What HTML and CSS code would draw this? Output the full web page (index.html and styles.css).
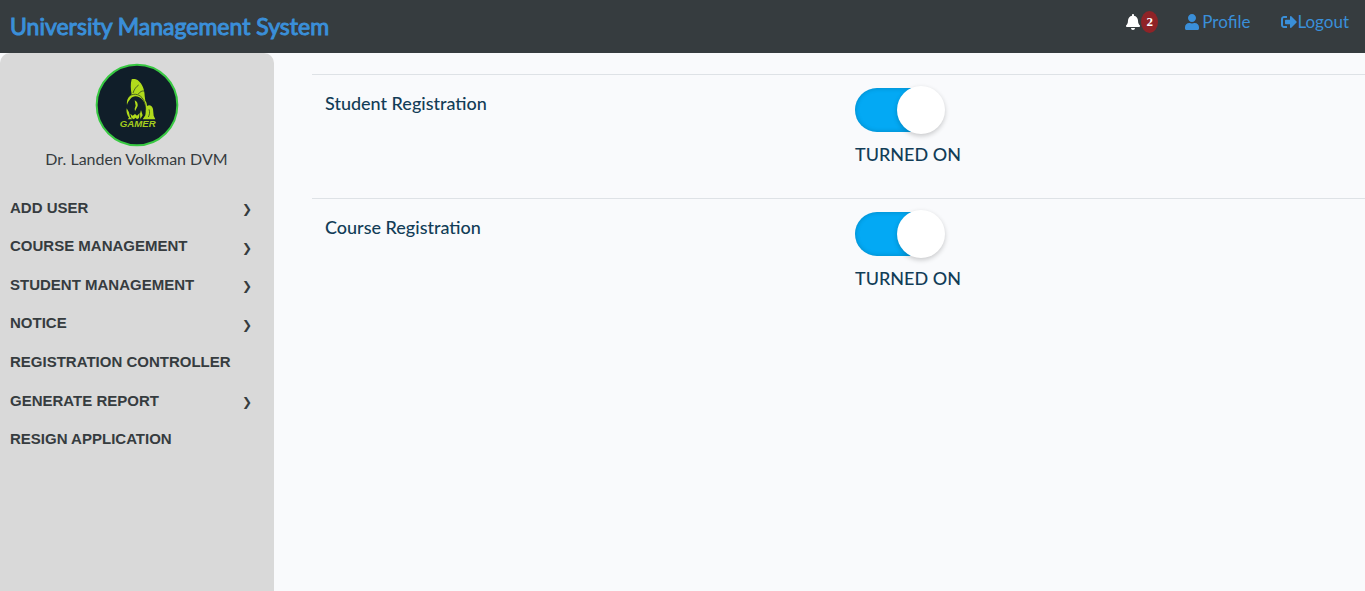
FILE: index.html
```html
<!DOCTYPE html>
<html lang="en">
<head>
<meta charset="utf-8">
<title>University Management System</title>
<link rel="stylesheet" href="styles.css">
</head>
<body>
<header class="topbar">
  <a class="brand" href="#">University Management System</a>
  <nav class="topnav" aria-label="Account">
    <button class="alerts" type="button" aria-label="Notifications: 2">
      <svg class="bell" viewBox="0 0 448 512" aria-hidden="true"><path d="M224 512c35.300 0 63.970-28.650 63.970-64H160.030c0 35.350 28.670 64 63.970 64zm215.390-149.710c-19.320-20.760-55.470-51.990-55.470-154.290 0-77.700-54.480-139.900-127.940-155.160V32c0-17.670-14.320-32-31.980-32s-31.980 14.330-31.980 32v20.840C118.560 68.100 64.080 130.300 64.080 208c0 102.300-36.150 133.530-55.470 154.290-6 6.450-8.660 14.160-8.610 21.710.110 16.400 12.980 32 32.100 32h383.800c19.120 0 32-15.600 32.100-32 .050-7.550-2.610-15.270-8.610-21.710z"/></svg>
      <span class="count">2</span>
    </button>
    <a class="navlink profile" href="#"><svg class="user" viewBox="0 0 448 512" aria-hidden="true"><path d="M224 256c70.700 0 128-57.300 128-128S294.700 0 224 0 96 57.300 96 128s57.300 128 128 128zm89.600 32h-16.700c-22.200 10.200-46.900 16-72.900 16s-50.600-5.800-72.900-16h-16.700C60.200 288 0 348.200 0 422.400V464c0 26.500 21.500 48 48 48h352c26.500 0 48-21.500 48-48v-41.600c0-74.200-60.200-134.400-134.400-134.400z"/></svg>Profile</a>
    <a class="navlink" href="#"><svg class="exit" viewBox="0 0 512 512" aria-hidden="true"><path d="M497 273L329 441c-15 15-41 4.500-41-17v-96H152c-13.300 0-24-10.700-24-24v-96c0-13.300 10.700-24 24-24h136V88c0-21.400 25.900-32 41-17l168 168c9.300 9.400 9.300 24.600 0 34zM192 436v-40c0-6.600-5.400-12-12-12H96c-17.700 0-32-14.300-32-32V160c0-17.700 14.300-32 32-32h84c6.600 0 12-5.400 12-12V76c0-6.600-5.400-12-12-12H96c-53 0-96 43-96 96v192c0 53 43 96 96 96h84c6.600 0 12-5.400 12-12z"/></svg>Logout</a>
  </nav>
</header>
<div class="shell">
  <aside class="sidebar">
    <div class="person">
      <svg class="avatar" viewBox="44 24 252 252" role="img" aria-label="Gamer avatar">
        <circle cx="170" cy="150" r="121" fill="#101e29" stroke="#38c942" stroke-width="6"/>
        <path fill="#b1db1c" d="M154 73c6-2 15-1 21 5 10 8 18 26 18 44l2 15c4 5 5 11 5 16 8-5 16 0 18 9l2 20 5 11h-38l8-12c3-16 1-34-8-46-11-13-28-15-37-3-5 6-8 11-10 18-2-14 4-25 14-32-3-15-4-32 0-45z"/>
        <path fill="#b1db1c" d="M163 136c7 3 10 10 9 17l-8 16-1-8 3-9zM139 160l7 12 3 14 7 7h-14l4-5c-6-8-9-18-7-28zM150 176l7 6 7-5 6 5 8-8-2 15-6 4-4-5-6 5-7-5zM182 165l5 16-7 11-1-16z"/>
        <path fill="none" stroke="#182a23" stroke-width="2" d="M158 114c4-11 9-19 17-24M174 117c5-7 11-10 18-9M145 125c12-11 30-9 40 3 8 10 11 24 11 36M206 163c3 9 2 15-2 23"/>
        <text class="crest" x="172" y="216" text-anchor="middle">GAMER</text>
      </svg>
      <span class="name">Dr. Landen Volkman DVM</span>
    </div>
    <nav class="menu" aria-label="Main">
      <button class="item" type="button">ADD USER<span class="arrow">❯</span></button>
      <button class="item" type="button">COURSE MANAGEMENT<span class="arrow">❯</span></button>
      <button class="item" type="button">STUDENT MANAGEMENT<span class="arrow">❯</span></button>
      <button class="item" type="button">NOTICE<span class="arrow">❯</span></button>
      <a class="item" href="#">REGISTRATION CONTROLLER</a>
      <button class="item" type="button">GENERATE REPORT<span class="arrow">❯</span></button>
      <a class="item" href="#">RESIGN APPLICATION</a>
    </nav>
  </aside>
  <main class="content">
    <section class="row">
      <label class="label" for="student">Student Registration</label>
      <div class="control">
        <input class="switch" id="student" type="checkbox" checked>
        <span class="state">TURNED ON</span>
      </div>
    </section>
    <section class="row">
      <label class="label" for="course">Course Registration</label>
      <div class="control">
        <input class="switch" id="course" type="checkbox" checked>
        <span class="state">TURNED ON</span>
      </div>
    </section>
  </main>
</div>
</body>
</html>
```
FILE: styles.css
```css
* { box-sizing: border-box; }
body {
  margin: 0;
  min-height: 100vh;
  display: flex;
  flex-direction: column;
  background: #f9fafc;
  color: #123d57;
  font-family: Lato, "Open Sans", sans-serif;
  font-size: 16px;
}
a { color: inherit; text-decoration: none; }
button { border: 0; padding: 0; background: none; font: inherit; color: inherit; cursor: pointer; }
svg { fill: currentColor; }

.topbar {
  display: flex;
  justify-content: space-between;
  align-items: flex-start;
  padding: 10px 16px 11px 10px;
  background: #363c3f;
  color: #3a8fd9;
}
.brand { font-size: 23px; line-height: 32px; -webkit-text-stroke: 1px currentColor; }
.topnav { display: flex; align-items: center; font-size: 17px; line-height: 24px; }
.alerts { display: flex; align-items: center; margin-right: 27px; color: #fff; }
.bell { width: 16px; height: 16px; }
.count {
  width: 17px;
  border-radius: 50%;
  background: #8f2327;
  font: bold 13px/22px "Liberation Serif", serif;
}
.navlink { display: flex; align-items: center; }
.profile { gap: 3px; margin-right: 31px; }
.user { width: 14px; height: 16px; }
.exit { width: 16px; height: 16px; }

.shell { flex: 1; display: flex; }
.sidebar {
  flex: 0 0 274px;
  padding: 10px 22px 0 10px;
  border-radius: 10px 10px 0 0;
  background: #d9d9d9;
  color: #363c3f;
}
.person { display: flex; flex-direction: column; align-items: center; padding-left: 11px; }
.avatar { width: 84px; height: 84px; }
.crest { font: italic bold 29px "Liberation Sans", sans-serif; fill: #a5cd1d; }
.name { line-height: 24px; }
.menu { display: grid; grid-auto-rows: 1fr; min-height: 270px; margin-top: 17px; }
.item {
  display: flex;
  align-items: center;
  justify-content: space-between;
  font: bold 15px "Liberation Sans", sans-serif;
}
.arrow { padding-top: 4px; font: bold 12px "DejaVu Sans", sans-serif; }

.content { flex: 1; min-width: 0; padding: 21px 0 0 38px; }
.row {
  display: grid;
  grid-template-columns: 1fr 1fr;
  gap: 20px;
  padding: 11px 0 32px 13px;
  border-top: 1px solid #dee2e6;
}
.label, .state { font-size: 18px; font-weight: 500; line-height: 24px; }
.label { justify-self: start; align-self: start; padding-top: 5px; }
.control { display: flex; flex-direction: column; align-items: flex-start; gap: 8px; }
.switch {
  appearance: none;
  display: flex;
  align-items: center;
  width: 88px;
  height: 44px;
  margin: 2px 0;
  border-radius: 22px;
  background: #c6c6c6;
  cursor: pointer;
}
.switch::before {
  content: "";
  flex: none;
  width: 48px;
  height: 48px;
  margin: 0 -2px;
  border-radius: 50%;
  background: #fff;
  box-shadow: 0 2px 5px rgba(0, 0, 0, 0.2);
}
.switch:checked { justify-content: flex-end; background: #03a9f4; box-shadow: inset 0 0 5px rgba(0, 0, 0, 0.2); }
```
